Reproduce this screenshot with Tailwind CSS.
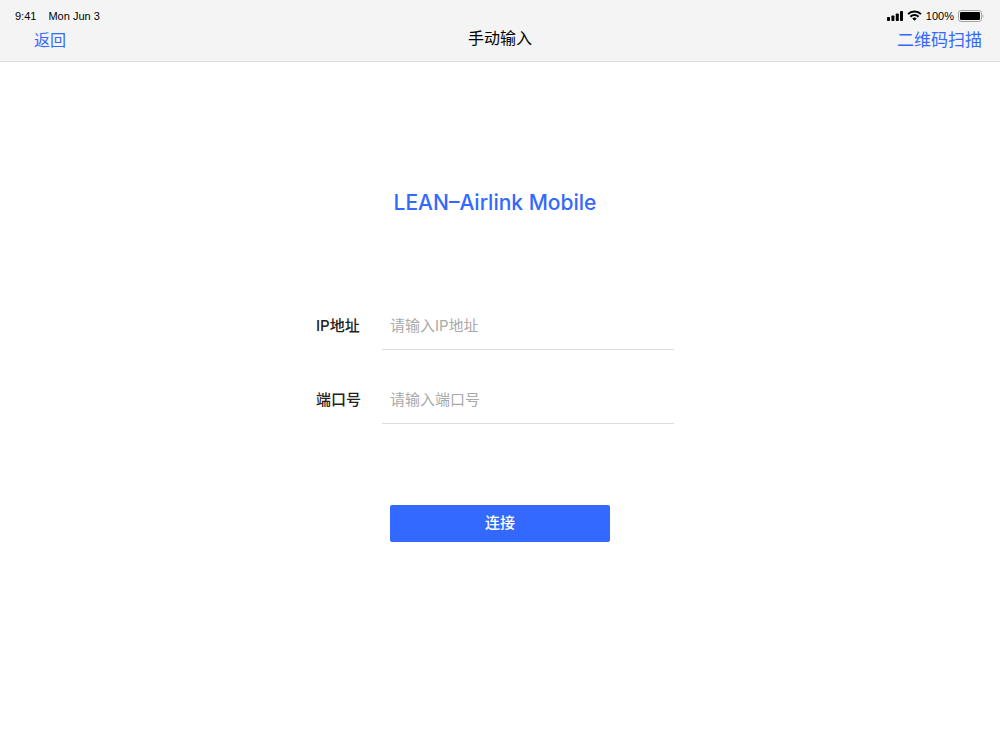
<!DOCTYPE html>
<html lang="zh-CN">
<head>
  <meta charset="UTF-8"/>
  <meta name="viewport" content="width=device-width, initial-scale=1.0"/>
  <title>手动输入 - LEAN–Airlink Mobile</title>
  <script src="https://cdn.jsdelivr.net/npm/@tailwindcss/browser@4"></script>
</head>
<body class="bg-white min-h-screen flex flex-col font-[Inter,'Noto_Sans_CJK_SC',sans-serif]">

  <!-- Header -->
  <header class="bg-[#f4f4f4] border-b border-[#dcdcdc] pt-2 pb-2">

    <!-- Status bar -->
    <div class="flex items-center justify-between pl-[15px] pr-4 h-[15px] text-[11px] leading-4 text-black font-['Liberation_Sans',sans-serif]">
      <div class="flex gap-3">
        <span>9:41</span>
        <span>Mon Jun 3</span>
      </div>
      <div class="flex items-center gap-1">
        <svg class="w-4 h-[10px]" viewBox="0 0 16 10" fill="#000" aria-hidden="true">
          <rect x="0" y="6" width="3" height="4" rx="0.8"/>
          <rect x="4.4" y="4.5" width="3" height="5.5" rx="0.8"/>
          <rect x="8.8" y="2.4" width="3" height="7.6" rx="0.8"/>
          <rect x="13" y="0" width="3" height="10" rx="0.8"/>
        </svg>
        <svg class="w-[15px] h-[11px]" viewBox="0 0 15 11" fill="none" stroke="#000" stroke-width="2" aria-hidden="true">
          <path d="M1 4.1a9.2 9.2 0 0 1 13 0"/>
          <path d="M3.4 6.7a5.8 5.8 0 0 1 8.2 0"/>
          <path d="M7.5 10.8 5.3 8.5a3.1 3.1 0 0 1 4.4 0z" fill="#000" stroke="none"/>
        </svg>
        <span>100%</span>
        <svg class="w-[26px] h-3" viewBox="0 0 26 12" aria-hidden="true">
          <rect x="0.5" y="0.5" width="23" height="11" rx="2.6" fill="none" stroke="#a3a3a3"/>
          <rect x="2" y="2" width="20" height="8" rx="1.2" fill="#000"/>
          <path d="M24.6 4.2c1.2.5 1.2 3.1 0 3.6z" fill="#a3a3a3"/>
        </svg>
      </div>
    </div>

    <!-- Navbar -->
    <nav class="flex items-end px-[18px] h-[30px]">
      <div class="flex-1">
        <a href="#" class="pl-4 text-base leading-[26px] text-[#3369ff]">返回</a>
      </div>
      <h1 class="text-base leading-[30px] text-black">手动输入</h1>
      <div class="flex-1 text-right">
        <a href="#" class="text-[17px] leading-[26px] text-[#3369ff]">二维码扫描</a>
      </div>
    </nav>
  </header>

  <!-- Main Content -->
  <main class="flex-grow w-full max-w-[368px] mx-auto pt-[125px]">
    <form id="connectForm">
      <div class="pr-[10px]">
        <h2 class="text-center text-[21px] leading-8 font-medium text-[#3369ff]">LEAN–Airlink Mobile</h2>

        <div class="flex items-center mt-[83px]">
          <label for="ip" class="w-[66px] shrink-0 text-[15px] font-medium text-[#222]">IP地址</label>
          <input type="text" id="ip" name="ip" placeholder="请输入IP地址"
                 class="w-full h-12 px-2 text-[15px] text-[#222] placeholder:text-[#aaa] border-b border-[#dcdcdc] outline-none focus:border-[#3369ff]"/>
        </div>

        <div class="flex items-center mt-[26px]">
          <label for="port" class="w-[66px] shrink-0 text-[15px] font-medium text-[#222]">端口号</label>
          <input type="text" id="port" name="port" placeholder="请输入端口号"
                 class="w-full h-12 px-2 text-[15px] text-[#222] placeholder:text-[#aaa] border-b border-[#dcdcdc] outline-none focus:border-[#3369ff]"/>
        </div>
      </div>

      <button type="submit" class="block w-3/5 h-[37px] mx-auto mt-[81px] bg-[#3369ff] hover:bg-[#2458ea] rounded-xs text-[15px] font-medium text-white">连接</button>
    </form>
  </main>

  <script>
    document.getElementById("connectForm").addEventListener("submit", (e) => {
      e.preventDefault();
    });
  </script>

</body>
</html>
